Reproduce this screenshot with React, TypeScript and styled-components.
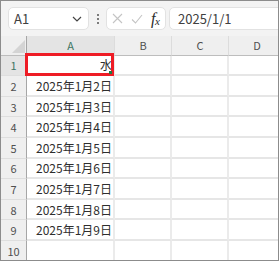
import React from "react";
import styled, { createGlobalStyle } from "styled-components";

const GlobalStyle = createGlobalStyle`
  html, body {
    margin: 0;
    padding: 0;
    background: #ffffff;
  }
  body {
    font-family: "Noto Sans CJK JP", "Noto Sans", sans-serif;
  }
`;

const Frame = styled.div`
  width: 279px;
  height: 261px;
  box-sizing: border-box;
  border: 1px solid #8c8c8c;
  overflow: hidden;
  background: #ffffff;
`;

const Toolbar = styled.div`
  height: 35px;
  background: #f3f3f3;
  display: flex;
  align-items: center;
  padding-left: 7px;
`;

const Box = styled.div`
  height: 23px;
  box-sizing: border-box;
  background: #ffffff;
  border: 1px solid #e2e2e2;
  border-radius: 5px;
  display: flex;
  align-items: center;
`;

const NameBox = styled(Box)`
  width: 81px;
  padding: 0 6px 0 5px;
  justify-content: space-between;
  font-size: 13px;
  color: #404040;
`;

const Grip = styled.div`
  width: 17px;
  display: flex;
  flex-direction: column;
  align-items: center;
  gap: 2px;

  span {
    width: 2px;
    height: 2px;
    background: #555;
    border-radius: 1px;
  }
`;

const FxBox = styled(Box)`
  width: 60px;
  padding: 0 3px 0 5px;
  gap: 8px;
`;

const FxLabel = styled.span`
  font-family: "Liberation Serif", serif;
  font-style: italic;
  font-size: 16px;
  line-height: 1;
  color: #2b2b2b;
  letter-spacing: -0.5px;

  sub {
    font-size: 11px;
    vertical-align: -1px;
  }
`;

const FormulaBox = styled(Box)`
  flex: 1;
  margin-left: 3px;
  margin-right: -8px;
  padding-left: 8px;
  font-size: 13px;
  color: #404040;
`;

const Sheet = styled.div`
  display: grid;
  grid-template-columns: 26px 88px 57px 57px 57px;
  grid-template-rows: 19.6px repeat(10, 20.6px);
`;

const Corner = styled.div`
  background: #efefef;
  border-right: 1px solid #a6a6a6;
  border-bottom: 1px solid #bdbdbd;
  position: relative;
  box-sizing: border-box;

  &::after {
    content: "";
    position: absolute;
    right: 1px;
    bottom: 2px;
    width: 0;
    height: 0;
    border-left: 13px solid transparent;
    border-bottom: 13px solid #d4d4d4;
  }
`;

const ColHead = styled.div<{ $active?: boolean }>`
  background: ${(p) => (p.$active ? "#e4e4e4" : "#efefef")};
  border-right: 1px solid #dcdcdc;
  border-bottom: 1px solid #bdbdbd;
  box-sizing: border-box;
  display: flex;
  align-items: center;
  justify-content: center;
  font-size: 11px;
  color: ${(p) => (p.$active ? "#3c7563" : "#505050")};
`;

const RowHead = styled.div<{ $active?: boolean }>`
  background: ${(p) => (p.$active ? "#e4e4e4" : "#efefef")};
  border-right: 1px solid #a6a6a6;
  border-bottom: 1px solid #dedede;
  box-sizing: border-box;
  display: flex;
  align-items: center;
  justify-content: center;
  font-size: 11px;
  color: ${(p) => (p.$active ? "#3c7563" : "#505050")};
`;

const Cell = styled.div`
  position: relative;
  border-right: 2px solid #ebebeb;
  border-bottom: 2px solid #e6e6e6;
  box-sizing: border-box;
  display: flex;
  align-items: center;
  justify-content: flex-end;
  padding-right: 1px;
  font-size: 12px;
  color: #2e2e2e;
  white-space: nowrap;
`;

const Selection = styled.div`
  position: absolute;
  top: -3px;
  left: -2px;
  right: -1px;
  bottom: -2px;
  border: 3px solid #ee1c25;
  pointer-events: none;

  &::after {
    content: "";
    position: absolute;
    right: -1px;
    bottom: -1px;
    width: 3px;
    height: 3px;
    background: #1d7a45;
  }
`;

const cols = ["A", "B", "C", "D"];

const values: string[] = [
  "水",
  "2025年1月2日",
  "2025年1月3日",
  "2025年1月4日",
  "2025年1月5日",
  "2025年1月6日",
  "2025年1月7日",
  "2025年1月8日",
  "2025年1月9日",
  "",
];

export default function App() {
  return (
    <>
      <GlobalStyle />
      <Frame>
        <Toolbar>
          <NameBox>
            <span>A1</span>
            <svg width="10" height="6" viewBox="0 0 10 6">
              <path d="M1 1l4 4 4-4" fill="none" stroke="#444" strokeWidth="1.2" />
            </svg>
          </NameBox>
          <Grip>
            <span />
            <span />
            <span />
          </Grip>
          <FxBox>
            <svg width="11" height="11" viewBox="0 0 11 11">
              <path d="M1 1l9 9M10 1l-9 9" stroke="#c4c4c4" strokeWidth="1.1" />
            </svg>
            <svg width="12" height="10" viewBox="0 0 12 10">
              <path d="M1 5.5l3.5 3.5L11 1" fill="none" stroke="#c4c4c4" strokeWidth="1.1" />
            </svg>
            <FxLabel>
              f<sub>x</sub>
            </FxLabel>
          </FxBox>
          <FormulaBox>2025/1/1</FormulaBox>
        </Toolbar>
        <Sheet>
          <Corner />
          {cols.map((c) => (
            <ColHead key={c} $active={c === "A"}>
              {c}
            </ColHead>
          ))}
          {values.map((v, i) => (
            <React.Fragment key={i}>
              <RowHead $active={i === 0}>{i + 1}</RowHead>
              <Cell>
                {v}
                {i === 0 && <Selection />}
              </Cell>
              <Cell />
              <Cell />
              <Cell />
            </React.Fragment>
          ))}
        </Sheet>
      </Frame>
    </>
  );
}
